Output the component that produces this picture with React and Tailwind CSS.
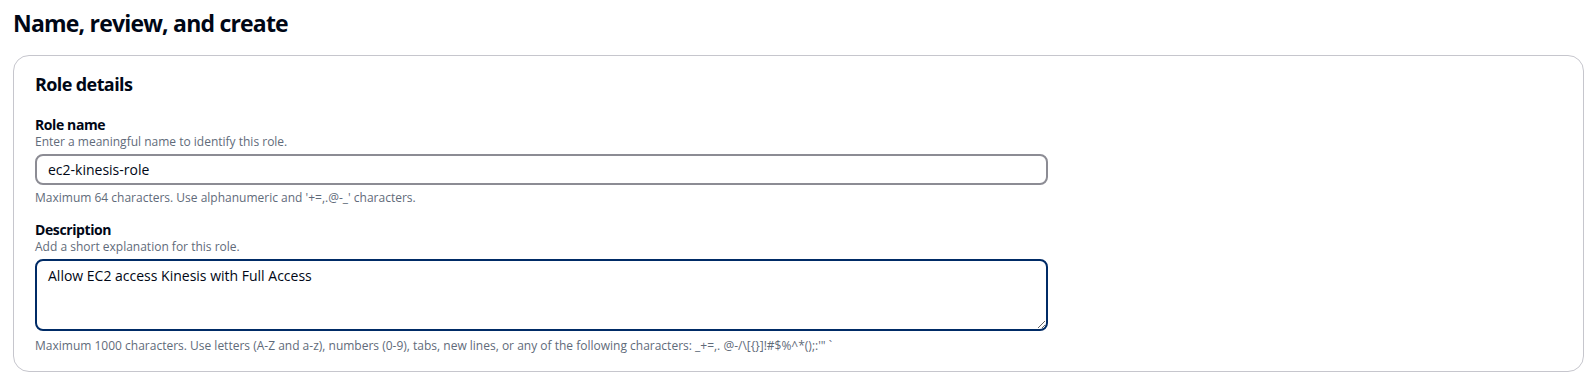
import React, { useEffect, useRef, useState } from "react";

const font = { fontFamily: '"Open Sans", "Noto Sans", Arial, sans-serif' };

function Field({ label, description, hint, hintGap, children }) {
  return (
    <div className="flex flex-col">
      <label className="text-[14px] font-bold leading-[18px] tracking-[-0.4px] text-[#000716]">{label}</label>
      <p className="text-[12px] leading-[16px] text-[#5f6b7a]">{description}</p>
      <div className="mt-[4px]">{children}</div>
      <p className={`${hintGap} text-[12px] leading-[16px] text-[#5f6b7a]`}>{hint}</p>
    </div>
  );
}

export default function App() {
  const [roleName, setRoleName] = useState("ec2-kinesis-role");
  const [desc, setDesc] = useState("Allow EC2 access Kinesis with Full Access");
  const areaRef = useRef(null);

  useEffect(() => {
    const el = areaRef.current;
    if (!el) return;
    el.focus();
    el.setSelectionRange(el.value.length, el.value.length);
  }, []);

  return (
    <div className="min-h-[379px] bg-white pl-[13px] pt-[8px] text-[#000716]" style={font}>
      <h1 className="text-[23px] font-bold leading-[30px] tracking-[-0.8px]">Name, review, and create</h1>

      <div className="mt-[17px] rounded-[16px] border border-[#c6c6cd] pl-[21px] pr-[535px] pt-[16px] pb-[17px]">
        <h2 className="text-[18px] font-bold leading-[24px] tracking-[-0.6px]">Role details</h2>

        <div className="mt-[20px] flex flex-col gap-[15px]">
          <Field
            label="Role name"
            description="Enter a meaningful name to identify this role."
            hint="Maximum 64 characters. Use alphanumeric and '+=,.@-_' characters."
            hintGap="mt-[5px]"
          >
            <input
              value={roleName}
              onChange={(e) => setRoleName(e.target.value)}
              className="block h-[31px] w-full rounded-[8px] border-2 border-[#8c8c94] px-[11px] text-[14px] text-[#000716] outline-none"
              style={font}
            />
          </Field>

          <Field
            label="Description"
            description="Add a short explanation for this role."
            hint={"Maximum 1000 characters. Use letters (A-Z and a-z), numbers (0-9), tabs, new lines, or any of the following characters: _+=,. @-/\\[{}]!#$%^*();:'\" `"}
            hintGap="mt-[7px]"
          >
            <textarea
              ref={areaRef}
              value={desc}
              onChange={(e) => setDesc(e.target.value)}
              className="block h-[72px] w-full resize-y rounded-[8px] border-2 border-[#002b66] px-[11px] pt-[4px] pb-[3px] text-[14px] leading-[22px] text-[#000716] caret-[#000716] outline-none"
              style={font}
            />
          </Field>
        </div>
      </div>
    </div>
  );
}
